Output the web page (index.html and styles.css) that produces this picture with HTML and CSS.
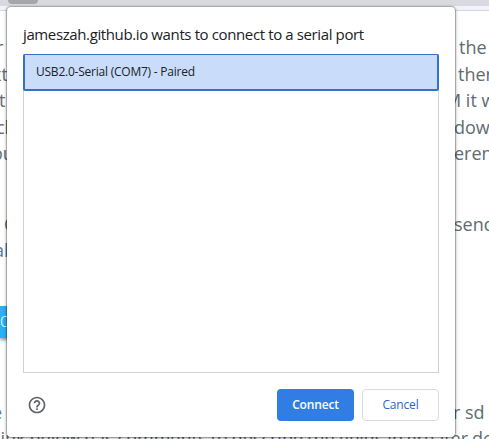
FILE: index.html
```html
<!DOCTYPE html>
<html lang="en">
<head>
<meta charset="utf-8">
<title>Serial port</title>
<link rel="stylesheet" href="styles.css">
</head>
<body>
<div class="browser-bar"><span class="tab-shape"></span></div>
<main class="page">
  <p class="line"><span class="start s1">r</span><span class="end e1">the</span></p>
  <p class="line"><span class="start s2">xt</span><span class="end e2">then</span></p>
  <p class="line"><span class="start s3">t</span><span class="end e3">M it w</span></p>
  <p class="line"><span class="start s4">cl</span><span class="end e4">down</span></p>
  <p class="line"><span class="start s5">ou</span><span class="end e4">eren</span></p>
  <p class="line second"><span class="start s6">C</span><span class="end e4">send</span></p>
  <p class="line"><span class="start s7">al</span></p>
  <div class="page-button">C</div>
  <p class="line third"><span class="start s8">e</span><span class="end e5">r sd <b>c</b></span></p>
  <p class="line last">link below has comments to describe the fields in greater de</p>
</main>
<section class="dialog" role="dialog">
  <h1>jameszah.github.io wants to connect to a serial port</h1>
  <div class="ports"><div class="port"><span>USB2.0-Serial (COM7) - Paired</span></div></div>
  <footer>
    <svg class="help" viewBox="0 0 24 24"><path d="M11 18h2v-2h-2v2zm1-16C6.48 2 2 6.48 2 12s4.48 10 10 10 10-4.480 10-10S17.520 2 12 2zm0 18c-4.410 0-8-3.590-8-8s3.590-8 8-8 8 3.590 8 8-3.590 8-8 8zm0-14c-2.210 0-4 1.790-4 4h2c0-1.100.9-2 2-2s2 .9 2 2c0 2-3 1.750-3 5h2c0-2.250 3-2.500 3-5 0-2.210-1.790-4-4-4z"/></svg>
    <button class="connect"><span>Connect</span></button>
    <button class="cancel"><span>Cancel</span></button>
  </footer>
</section>
</body>
</html>
```
FILE: styles.css
```css
* { box-sizing: border-box; }
body { margin: 0; width: 489px; height: 439px; overflow: hidden; position: relative; background: #fff; font-family: "Open Sans", sans-serif; }
.browser-bar { height: 11px; background: linear-gradient(#d8dae0 0 6px, #f2f3fa 6px 10px, #d5d6dc 10px); }
.tab-shape { display: block; width: 30px; height: 4px; margin-left: 8px; border-radius: 0 0 12px 12px; background: #a6a7ab; }
.page { padding-top: 23px; color: #606c71; font: 18px/26.5px "Open Sans", sans-serif; overflow: hidden; }
.line { display: flex; margin: 0; height: 26.5px; white-space: nowrap; }
.start { width: 446px; flex: none; }
.s1 { text-indent: -4px; }
.s2 { text-indent: -8px; }
.s3 { text-indent: -1px; }
.s4 { text-indent: -4px; }
.s5 { text-indent: -8px; }
.s6 { text-indent: 4px; }
.s7 { text-indent: -6px; color: #4e7ba5; }
.s8 { text-indent: -8px; color: #4e7ba5; }
.e1 { padding-left: 13px; }
.e2 { padding-left: 12px; }
.e3 { margin-left: -1px; }
.e4 { padding-left: 8px; }
.e5 { padding-left: 7px; }
.end b { margin-left: -1px; font-weight: 400; color: #f0c652; }
.second { margin-top: 44px; }
.page-button { width: 80px; height: 32px; margin-top: 42px; background: #29b0f5; color: #fff; font: 300 15px/32px Roboto, sans-serif; box-shadow: 0 2px 3px #0006; }
.third { margin-top: 61px; }
.last { margin-left: -4px; word-spacing: -.7px; }
.dialog { position: absolute; left: 7px; top: 7px; width: 448px; height: 430px; padding: 16px 16px 0; border-radius: 4px; background: #fff; box-shadow: 0 0 1px 1px #0004, 0 1px 4px #0005; }
h1 { margin: 0; height: 31px; font-size: 15px; font-weight: 400; line-height: 23px; letter-spacing: -.38px; color: #202124; white-space: nowrap; }
.ports { height: 319px; border: 1px solid #d2d2d2; }
.port { height: 37px; margin: -1px; padding-left: 11px; border: 2px solid #3472c5; border-top-width: 1px; border-radius: 2px; background: #c9ddfb; font-size: 12px; line-height: 34px; letter-spacing: -.23px; color: #202124; }
footer { display: flex; align-items: center; padding: 16px 0 0 4px; }
.help { width: 20px; height: 20px; fill: #5f6368; }
button { width: 77px; height: 32px; padding: 0; border: 0; border-radius: 4px; font: 600 12px/30px "Open Sans", sans-serif; letter-spacing: -.15px; }
.connect { margin-left: auto; margin-right: 8px; background: #307ee3; color: #fff; }
.cancel { border: 1px solid #d8dbe0; background: #fff; color: #2b66c9; font-weight: 500; }
```
